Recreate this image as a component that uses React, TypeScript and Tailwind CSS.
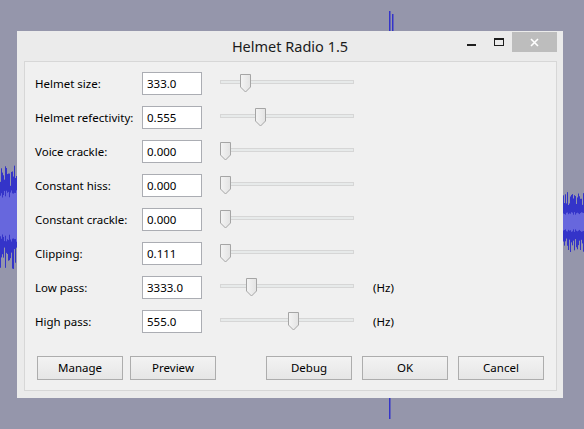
import React from "react";

const rows = [
  { label: "Helmet size:", value: "333.0", thumb: 20, hz: false },
  { label: "Helmet refectivity:", value: "0.555", thumb: 35, hz: false },
  { label: "Voice crackle:", value: "0.000", thumb: 0, hz: false },
  { label: "Constant hiss:", value: "0.000", thumb: 0, hz: false },
  { label: "Constant crackle:", value: "0.000", thumb: 0, hz: false },
  { label: "Clipping:", value: "0.111", thumb: 0, hz: false },
  { label: "Low pass:", value: "3333.0", thumb: 26, hz: true },
  { label: "High pass:", value: "555.0", thumb: 68, hz: true },
];

// simple seeded noise so the wave looks the same every render
function noise(i: number) {
  const s = Math.sin(i * 12.9898 + 78.233) * 43758.5453;
  return s - Math.floor(s);
}

function Wave({ x0, width, center, amp, inner }: { x0: number; width: number; center: number; amp: number; inner: number }) {
  const cols = Array.from({ length: width }, (_, i) => i);
  return (
    <g>
      {cols.map((i) => {
        const a = amp * (0.55 + 0.45 * noise(i + x0));
        const b = amp * (0.55 + 0.45 * noise(i + x0 + 50));
        const c = inner * (0.7 + 0.3 * noise(i + x0 + 99));
        return (
          <g key={i}>
            <rect x={x0 + i} y={center - a} width={1} height={a + b} fill="#3434c9" />
            <rect x={x0 + i} y={center - c} width={1} height={c * 2} fill="#6767dd" />
          </g>
        );
      })}
    </g>
  );
}

function Thumb() {
  return (
    <svg width="12" height="19" viewBox="0 0 12 19" className="absolute top-[-6px]">
      <defs>
        <linearGradient id="tg" x1="0" x2="1" y1="0" y2="0">
          <stop offset="0" stopColor="#f4f4f4" />
          <stop offset="1" stopColor="#e3e3e3" />
        </linearGradient>
      </defs>
      <path d="M0.5 0.5 H10.5 V13 L5.5 18 L0.5 13 Z" fill="url(#tg)" stroke="#a5a5a5" />
    </svg>
  );
}

function Slider({ pos }: { pos: number }) {
  return (
    <div className="relative w-[134px] h-[23px] ml-[18px] shrink-0">
      <div className="absolute left-0 right-0 top-[8px] h-[4px] bg-[#e7eaea] border border-[#d6d6d6]" />
      <div className="absolute top-[8px]" style={{ left: pos }}>
        <Thumb />
      </div>
    </div>
  );
}

function Btn({ children, className = "" }: { children: React.ReactNode; className?: string }) {
  return (
    <button
      type="button"
      className={`w-[86px] h-[24px] border border-[#adadad] bg-gradient-to-b from-[#f3f3f3] to-[#e6e6e6] text-[11.5px] text-black leading-none ${className}`}
    >
      {children}
    </button>
  );
}

export default function App() {
  return (
    <div
      className="relative w-[584px] h-[429px] overflow-hidden bg-[#9596ab]"
      style={{ fontFamily: '"Noto Sans", "Open Sans", sans-serif' }}
    >
      <svg className="absolute inset-0" width="584" height="429">
        <Wave x0={0} width={17} center={216} amp={54} inner={26} />
        <Wave x0={563} width={21} center={222} amp={30} inner={10} />
        <rect x={389} y={11} width={1.5} height={20} fill="#3434c9" />
        <rect x={392} y={14} width={1.5} height={17} fill="#3434c9" />
        <rect x={389} y={398} width={1.5} height={21} fill="#3434c9" />
      </svg>

      {/* dialog window */}
      <div className="absolute left-[17px] top-[31px] w-[546px] h-[367px] bg-[#ebebeb] flex flex-col">
        <div className="relative h-[30px] shrink-0 flex items-center justify-center">
          <span className="text-[14.5px] text-[#1b1b1b] pt-[1px]">Helmet Radio 1.5</span>
          <div className="absolute right-[6px] top-[1px] flex items-start">
            <div className="w-[9px] h-[2px] bg-[#1e1e1e] mt-[12px] mr-[18px]" />
            <div className="w-[10px] h-[8px] border border-t-2 border-[#1e1e1e] mt-[6px] mr-[8px]" />
            <div className="w-[45px] h-[20px] bg-[#bdbdbd] flex items-center justify-center">
              <svg width="9" height="9" viewBox="0 0 9 9">
                <path d="M1 1 L8 8 M8 1 L1 8" stroke="#fff" strokeWidth="1.6" />
              </svg>
            </div>
          </div>
        </div>

        <div className="flex-1 ml-[7px] mr-[6px] mb-[7px] bg-[#f0f0f0] border border-[#d7d7d7] flex flex-col">
          <div className="flex flex-col gap-[11px] pt-[10px] pl-[10px]">
            {rows.map((r) => (
              <div key={r.label} className="flex items-center h-[23px]">
                <span className="w-[107px] shrink-0 text-[11.5px] text-black">{r.label}</span>
                <div className="w-[60px] h-[23px] shrink-0 bg-white border border-[#abadb3] flex items-center pl-[4px] text-[11.5px] text-black">
                  {r.value}
                </div>
                <Slider pos={r.thumb} />
                {r.hz && <span className="ml-[19px] text-[11.5px] text-black">(Hz)</span>}
              </div>
            ))}
          </div>

          <div className="flex mt-[23px] pl-[12px]">
            <Btn>Manage</Btn>
            <Btn className="ml-[7px]">Preview</Btn>
            <Btn className="ml-[50px]">Debug</Btn>
            <Btn className="ml-[10px]">OK</Btn>
            <Btn className="ml-[10px]">Cancel</Btn>
          </div>
        </div>
      </div>
    </div>
  );
}
